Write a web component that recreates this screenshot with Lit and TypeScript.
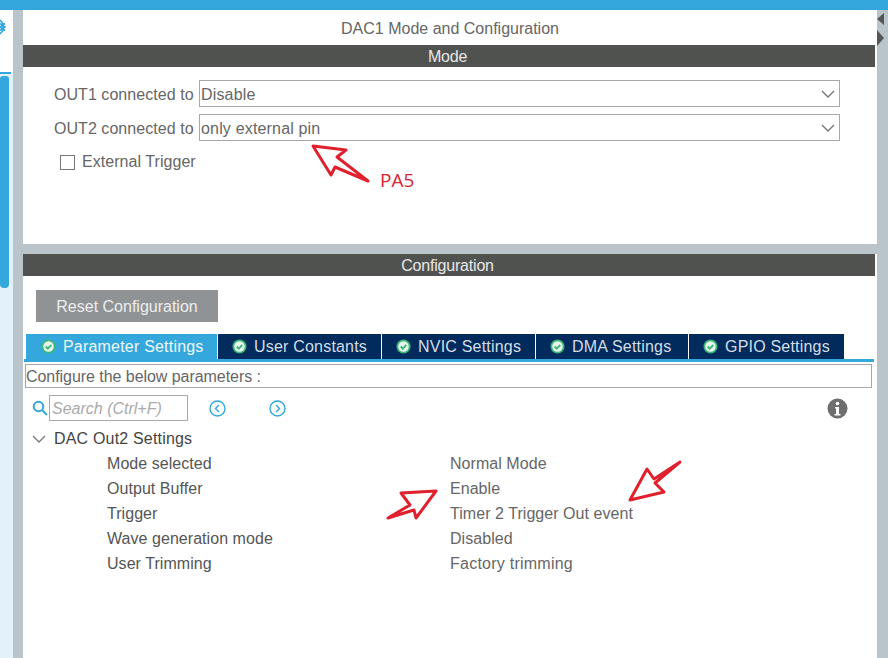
import { LitElement, html, css, svg } from "lit";
import { customElement } from "lit/decorators.js";

const check = html`<svg class="chk" viewBox="0 0 16 16"><circle cx="8" cy="8" r="7.5" fill="#3cb878"/><circle cx="8" cy="8" r="5.6" fill="#e8f6ee"/><path d="M5 8l2.2 2.2L11 6.4" fill="none" stroke="#3cb878" stroke-width="2"/></svg>`;
const chev = html`<svg class="chev" viewBox="0 0 14 8"><path d="M1 1l6 6 6-6" fill="none" stroke="#777" stroke-width="1.4"/></svg>`;

@customElement("app-root")
export class AppRoot extends LitElement {
  static styles = css`
    :host { display: block; width: 888px; height: 658px; overflow: hidden; position: relative; background: #fff; font-family: "Liberation Sans", Arial, sans-serif; font-size: 16px; color: #666; letter-spacing: 0.05px; white-space: nowrap; }
    .top { height: 10px; background: #34a7dc; }
    .body { display: flex; height: 648px; }
    .side { width: 13px; flex: none; display: flex; flex-direction: column; }
    .side-top { height: 62px; flex: none; overflow: hidden; padding-top: 9px; box-sizing: border-box; }
    .flake { display: block; width: 6px; height: 16px; }
    .side-line { height: 2px; width: 11px; background: #34a7dc; flex: none; }
    .side-rest { flex: 1; background: #e2f1fa; padding-top: 2px; }
    .thumb { width: 9px; height: 212px; background: #34a7dc; border-radius: 3px 3px 4px 4px; }
    .gutter { width: 10px; background: #b9c4cb; flex: none; }
    .rail { width: 11px; background: #b9c4cb; flex: none; display: flex; flex-direction: column; gap: 5px; padding-top: 3px; box-sizing: border-box; }
    .main { width: 854px; flex: none; display: flex; flex-direction: column; }
    .title { height: 35px; display: flex; align-items: center; justify-content: center; padding-top: 2px; box-sizing: border-box; letter-spacing: 0; }
    .bar { height: 22px; background: #505250; color: #e8e8e8; display: flex; align-items: center; justify-content: center; flex: none; padding: 2px 3px 0 0; box-sizing: border-box; margin-right: 2px; letter-spacing: -0.2px; }
    .mode { height: 177px; padding: 13px 37px 0 31px; box-sizing: border-box; display: flex; flex-direction: column; gap: 7px; flex: none; }
    .band { height: 10px; background: #b9c4cb; flex: none; }
    .row { display: flex; align-items: center; gap: 5px; height: 27px; }
    .row label { width: 140px; flex: none; padding-top: 2px; }
    .select { width: 641px; height: 27px; border: 1.5px solid #a8a8a8; box-sizing: border-box; display: flex; align-items: center; justify-content: space-between; padding: 0 4px 0 1px; letter-spacing: 0.17px; }
    .select span { padding-top: 2px; }
    .chev { width: 14px; height: 8px; }
    .trig { display: flex; align-items: center; gap: 7px; padding-left: 6px; margin-top: 5px; }
    .box { width: 15px; height: 15px; border: 1.5px solid #777; box-sizing: border-box; }
    .conf { flex: 1; position: relative; }
    .reset { margin: 14px 0 0 13px; width: 182px; height: 32px; background: #8f9396; color: #ededed; display: flex; align-items: center; justify-content: center; padding-top: 2px; box-sizing: border-box; letter-spacing: 0; }
    .tabs { display: flex; margin: 12px 0 0 3px; height: 25px; gap: 1px; }
    .tab { background: #002b5c; color: #d5dde5; display: flex; align-items: center; gap: 7px; padding: 0 0 0 14px; flex: none; box-sizing: border-box; letter-spacing: 0.2px; }
    .tab.on { background: #34a7dc; color: #eef8fd; padding-left: 15px; }
    .chk { width: 15px; height: 15px; flex: none; }
    .line { height: 3px; background: #34a7dc; margin: 0 3px 0 1px; }
    .cfg { margin: 2px 5px 0 2px; height: 24px; border: 1.5px solid #a8a8a8; box-sizing: border-box; display: flex; align-items: center; padding: 2px 0 0 0; letter-spacing: -0.05px; }
    .tools { display: flex; align-items: center; height: 26px; margin-top: 7px; padding-left: 9px; position: relative; }
    .mag { width: 16px; height: 16px; flex: none; }
    .search { width: 139px; height: 26px; border: 1.5px solid #a8a8a8; box-sizing: border-box; margin-left: 1px; color: #aaa; font-style: italic; display: flex; align-items: center; padding: 1px 0 0 2px; letter-spacing: 0; }
    .nav { width: 17px; height: 17px; flex: none; }
    .nav.a { margin-left: 21px; }
    .nav.b { margin-left: 43px; }
    .info { width: 21px; height: 21px; flex: none; margin-left: auto; margin-right: 29px; }
    .tree { margin-top: 5px; }
    .head { display: flex; align-items: center; height: 25px; color: #444; padding-left: 9px; gap: 8px; letter-spacing: 0.18px; }
    .head svg { width: 14px; height: 8px; }
    .p { display: grid; grid-template-columns: 343px 1fr; padding-left: 84px; height: 25px; align-items: center; }
    .p span:first-child { color: #555; }
    .p:last-child span:last-child { letter-spacing: 0.24px; }
    .over { position: absolute; left: 0; top: 0; pointer-events: none; }
    .pa5 { position: absolute; left: 380px; top: 167px; color: #d9232e; font-family: "Open Sans", sans-serif; font-size: 19px; letter-spacing: 0; }
  `;
  render() {
    const tabs = [["Parameter Settings", 191], ["User Constants", 163], ["NVIC Settings", 153], ["DMA Settings", 152], ["GPIO Settings", 155]] as const;
    const params = [["Mode selected", "Normal Mode"], ["Output Buffer", "Enable"], ["Trigger", "Timer 2 Trigger Out event"], ["Wave generation mode", "Disabled"], ["User Trimming", "Factory trimming"]];
    return html`
      <div class="top"></div>
      <div class="body">
        <div class="side">
          <div class="side-top"><svg class="flake" viewBox="0 0 6 16"><path d="M0 1l3 3.5v7L0 15M5 4.5L0 8l5 3.5M0 4.5L5 8l-5 3.5" fill="none" stroke="#34a7dc" stroke-width="1.6"/></svg></div>
          <div class="side-line"></div>
          <div class="side-rest"><div class="thumb"></div></div>
        </div>
        <div class="gutter"></div>
        <div class="main">
          <div class="title">DAC1 Mode and Configuration</div>
          <div class="bar">Mode</div>
          <div class="mode">
            <div class="row"><label>OUT1 connected to</label><div class="select"><span>Disable</span> ${chev}</div></div>
            <div class="row"><label>OUT2 connected to</label><div class="select"><span>only external pin</span> ${chev}</div></div>
            <div class="trig"><div class="box"></div>External Trigger</div>
          </div>
          <div class="band"></div>
          <div class="bar">Configuration</div>
          <div class="conf">
            <div class="reset">Reset Configuration</div>
            <div class="tabs">
              ${tabs.map(([t, w], i) => html`<div class="tab ${i === 0 ? "on" : ""}" style="width:${w}px">${check}${t}</div>`)}
            </div>
            <div class="line"></div>
            <div class="cfg">Configure the below parameters :</div>
            <div class="tools">
              <svg class="mag" viewBox="0 0 16 16"><circle cx="6.5" cy="6.5" r="4.8" fill="none" stroke="#34a7dc" stroke-width="2"/><path d="M10 10l5 5" stroke="#34a7dc" stroke-width="2"/></svg>
              <div class="search">Search (Ctrl+F)</div>
              <svg class="nav a" viewBox="0 0 17 17"><circle cx="8.5" cy="8.5" r="7.5" fill="none" stroke="#34a7dc" stroke-width="1.4"/><path d="M10 5l-3.5 3.5L10 12" fill="none" stroke="#34a7dc" stroke-width="1.4"/></svg>
              <svg class="nav b" viewBox="0 0 17 17"><circle cx="8.5" cy="8.5" r="7.5" fill="none" stroke="#34a7dc" stroke-width="1.4"/><path d="M7 5l3.5 3.5L7 12" fill="none" stroke="#34a7dc" stroke-width="1.4"/></svg>
              <svg class="info" viewBox="0 0 21 21"><circle cx="10.5" cy="10.5" r="10" fill="#6e6e6e"/><circle cx="10.5" cy="5.5" r="1.8" fill="#fff"/><path d="M8 9h4v7h1.5v1.5h-6V16H9v-5.5H8z" fill="#fff"/></svg>
            </div>
            <div class="tree">
              <div class="head"><svg viewBox="0 0 14 8"><path d="M1 1l6 6 6-6" fill="none" stroke="#777" stroke-width="1.3"/></svg>DAC Out2 Settings</div>
              ${params.map(([a, b]) => html`<div class="p"><span>${a}</span><span>${b}</span></div>`)}
            </div>
          </div>
        </div>
        <div class="rail">
          <svg width="7" height="12" viewBox="0 0 7 12"><path d="M7 0v12L0 6z" fill="#555"/></svg>
          <svg width="7" height="16" viewBox="0 0 7 16"><path d="M0 0v16l7-8z" fill="#555"/></svg>
        </div>
      </div>
      <svg class="over" width="888" height="658" viewBox="0 0 888 658" fill="#fff" stroke="#e0202c" stroke-width="3" stroke-linejoin="round" stroke-linecap="round">
        ${svg`<path d="M313 146L346 150L337 157L368 181L335 167L331 175Z"/>
        <path d="M436 491L401 493L410 505L388 518L414 510L416 518Z" />
        <path d="M680 462L654 479L647 469L630 500L664 492L655 483Z" />`}
      </svg>
      <div class="pa5">PA5</div>
    `;
  }
}
